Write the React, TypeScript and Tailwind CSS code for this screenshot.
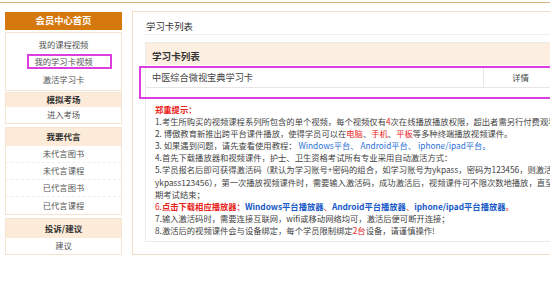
import React from 'react';

const FONT = { fontFamily: '"Noto Sans CJK SC", "Noto Sans", sans-serif' };

type SideGroup = {
  title: string;
  items: string[];
  head: string;
  item: string;
};

const groups: SideGroup[] = [
  { title: '模拟考场', items: ['进入考场'], head: 'h-[14px]', item: 'h-[16px]' },
  { title: '我要代言', items: ['未代言图书', '未代言课程', '已代言图书', '已代言课程'], head: 'h-[18px]', item: 'h-[17px]' },
  { title: '投诉/建议', items: ['建议'], head: 'h-[19px]', item: 'h-[16px]' },
];

function Red({ children }: { children: React.ReactNode }) {
  return <span className="text-[#e8231b]">{children}</span>;
}

function Blue({ children, bold }: { children: React.ReactNode; bold?: boolean }) {
  return <span className={bold ? 'text-[#1558c8] font-bold' : 'text-[#2a6fd6]'}>{children}</span>;
}

function Sidebar() {
  return (
    <div className="w-[117px] shrink-0 ml-[5px] mt-[9px] flex flex-col">
      <div className="h-[18px] bg-[#d5790f] text-white font-bold text-[9.3px] flex items-center justify-center">
        会员中心首页
      </div>
      <div className="mt-[2px] border border-[#f5e4d0] bg-white py-[2px] text-[8.3px] text-[#555]">
        <div className="h-[17.5px] flex items-center justify-center">我的课程视频</div>
        <div className="h-[17.5px] flex items-center justify-center">我的学习卡视频</div>
        <div className="h-[17.5px] flex items-center justify-center">激活学习卡</div>
      </div>
      {groups.map((g, i) => (
        <div key={g.title} className={(i === 0 ? 'mt-[1px]' : 'mt-[3px]') + ' border border-[#f5e4d0] bg-white'}>
          <div className={g.head + ' bg-[#fcebd8] text-[8.5px] font-bold text-[#333] flex items-center justify-center'}>
            {g.title}
          </div>
          {g.items.map((it, j) => (
            <div
              key={it}
              className={
                g.item +
                ' flex items-center justify-center text-[8.3px] text-[#555]' +
                (j < g.items.length - 1 ? ' border-b border-dashed border-[#eee]' : '')
              }
            >
              {it}
            </div>
          ))}
        </div>
      ))}
    </div>
  );
}

function Notices() {
  return (
    <div className="mt-[15px] pl-[9px] pb-[5px] text-[8.3px] leading-[12.1px] text-[#444] whitespace-nowrap">
      <div className="font-bold text-[#e8231b]">郑重提示：</div>
      <div>1.考生所购买的视频课程系列所包含的单个视频，每个视频仅有<Red>4</Red>次在线播放播放权限，超出者需另行付费观看</div>
      <div>
        2. 博傲教育新推出跨平台课件播放，使得学员可以在<Red>电脑</Red>、<Red>手机</Red>、<Red>平板</Red>等多种终端播放视频课件。
      </div>
      <div>
        3. 如果遇到问题，请先查看使用教程： <Blue>Windows平台、 Android平台、 iphone/ipad平台。</Blue>
      </div>
      <div>4.首先下载播放器和视频课件，护士、卫生资格考试所有专业采用自动激活方式：</div>
      <div>5.学员报名后即可获得激活码（默认为学习账号+密码的组合，如学习账号为ykpass，密码为123456，则激活码为</div>
      <div>ykpass123456），第一次播放视频课件时，需要输入激活码，成功激活后，视频课件可不限次数地播放，直至考生本</div>
      <div>期考试结束；</div>
      <div>
        <Red>6.</Red>
        <span className="font-bold text-[#e8231b]">点击下载相应播放器：</span>
        <Blue bold>Windows平台播放器</Blue>
        <Red>、</Red>
        <Blue bold>Android平台播放器</Blue>
        <Red>、</Red>
        <Blue bold>iphone/ipad平台播放器</Blue>
        <Red>。</Red>
      </div>
      <div>7.输入激活码时，需要连接互联网，wifi或移动网络均可，激活后便可断开连接；</div>
      <div>
        8.激活后的视频课件会与设备绑定，每个学员限制绑定<Red>2台</Red>设备，请谨慎操作!
      </div>
    </div>
  );
}

function Main() {
  return (
    <div className="ml-[10px] mt-[8px] w-[427px] shrink-0 border border-[#f2dcc4] pl-[12px] pb-[8px] bg-white">
      <div className="h-[23px] pt-[8px] pl-[1px] border-b border-[#eee] text-[9.4px] leading-[12px] text-[#333]">
        学习卡列表
      </div>
      <div className="mt-[7px] border border-[#ebebeb]">
        <div className="h-[22px] bg-[#fcefe2] pl-[6px] pt-[7px] text-[9.6px] leading-[12px] font-bold text-[#333]">
          学习卡列表
        </div>
        <div className="mt-[2px] h-[21px] border-y border-[#e6e6e6] flex text-[#444]">
          <div className="flex-1 pl-[6px] flex items-center text-[9.2px]">中医综合微视宝典学习卡</div>
          <div className="w-[74px] border-l border-[#e6e6e6] flex items-center justify-center text-[8.5px]">详情</div>
        </div>
        <Notices />
      </div>
    </div>
  );
}

export default function App() {
  return (
    <div className="relative w-[550px] h-[296px] overflow-hidden bg-white" style={FONT}>
      <div className="pt-[2px]">
        <div className="h-px bg-[#d9b482]" />
      </div>
      <div className="flex">
        <Sidebar />
        <Main />
      </div>
      {/* annotation boxes */}
      <div className="absolute left-[27px] top-[54px] w-[85px] h-[15px] border-2 border-[#dd3ee0]" />
      <div className="absolute left-[139px] top-[66px] w-[450px] h-[33px] border-2 border-[#dd3ee0]" />
    </div>
  );
}
